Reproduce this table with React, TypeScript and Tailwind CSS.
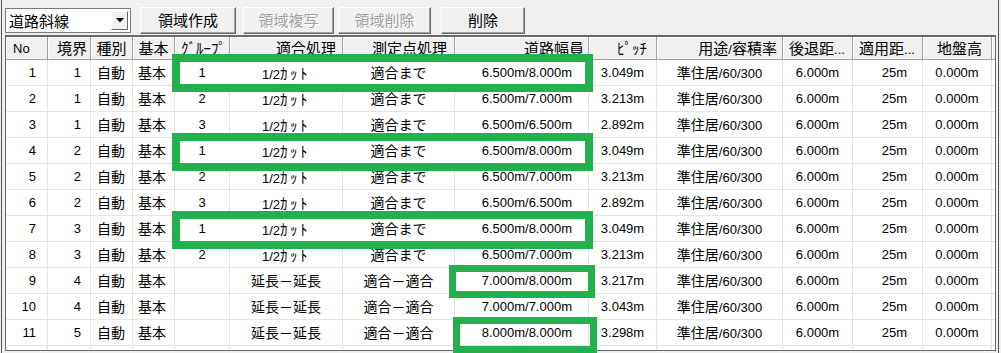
const jp = "font-['Noto_Sans_CJK_JP',sans-serif]";

function isWide(ch: string) {
  return /[\u3000-\u9fff\uff01-\uff60]/.test(ch);
}
function isKana(ch: string) {
  return /[\uff61-\uff9f]/.test(ch);
}

// split text into runs so CJK glyphs get their own size
function Txt({ s, big = false }: { s: string; big?: boolean }) {
  const runs: { t: string; k: number }[] = [];
  for (const ch of s) {
    const k = isWide(ch) ? 1 : isKana(ch) ? 2 : 0;
    const last = runs[runs.length - 1];
    if (last && last.k === k) last.t += ch;
    else runs.push({ t: ch, k });
  }
  return (
    <span className="whitespace-nowrap leading-none">
      {runs.map((r, i) =>
        r.k === 1 ? (
          <span key={i} className={`${jp} ${big ? "text-[15px]" : "text-[14px]"}`}>
            {r.t}
          </span>
        ) : r.k === 2 ? (
          <span key={i} className={`${jp} ${big ? "text-[15px]" : "text-[15px] tracking-[2.5px]"}`}>
            {r.t}
          </span>
        ) : (
          <span key={i}>{r.t}</span>
        )
      )}
    </span>
  );
}

const cols = [
  { w: "w-[42px]", h: "No", hc: "justify-start pl-[7px]", dc: "justify-end pr-[11px]" },
  { w: "w-[43px]", h: "境界", hc: "justify-end pr-[3px]", dc: "justify-end pr-[9px]" },
  { w: "w-[42px]", h: "種別", hc: "justify-center", dc: "justify-start pl-[6px]" },
  { w: "w-[42px]", h: "基本", hc: "justify-center", dc: "justify-start pl-[5px]" },
  { w: "w-[55px]", h: "ｸﾞﾙｰﾌﾟ", hc: "justify-start pl-[6px]", dc: "justify-center" },
  { w: "w-[113px]", h: "適合処理", hc: "justify-end pr-[6px]", dc: "justify-center" },
  { w: "w-[112px]", h: "測定点処理", hc: "justify-end pr-[7px]", dc: "justify-center" },
  { w: "w-[134px]", h: "道路幅員", hc: "justify-end pr-[4px]", dc: "justify-end pr-[16px]" },
  { w: "w-[68px]", h: "ﾋﾟｯﾁ", hc: "justify-end pr-[9px]", dc: "justify-center" },
  { w: "w-[126px]", h: "用途/容積率", hc: "justify-end pr-[5px]", dc: "justify-center" },
  { w: "w-[70px]", h: "後退距...", hc: "justify-start pl-[6px]", dc: "justify-center" },
  { w: "w-[70px]", h: "適用距...", hc: "justify-start pl-[6px]", dc: "justify-end pr-[15px]" },
  { w: "w-[69px]", h: "地盤高", hc: "justify-end pr-[9px]", dc: "justify-center" },
];

const rows = [
  ["1", "1", "自動", "基本", "1", "1/2ｶｯﾄ", "適合まで", "6.500m/8.000m", "3.049m"],
  ["2", "1", "自動", "基本", "2", "1/2ｶｯﾄ", "適合まで", "6.500m/7.000m", "3.213m"],
  ["3", "1", "自動", "基本", "3", "1/2ｶｯﾄ", "適合まで", "6.500m/6.500m", "2.892m"],
  ["4", "2", "自動", "基本", "1", "1/2ｶｯﾄ", "適合まで", "6.500m/8.000m", "3.049m"],
  ["5", "2", "自動", "基本", "2", "1/2ｶｯﾄ", "適合まで", "6.500m/7.000m", "3.213m"],
  ["6", "2", "自動", "基本", "3", "1/2ｶｯﾄ", "適合まで", "6.500m/6.500m", "2.892m"],
  ["7", "3", "自動", "基本", "1", "1/2ｶｯﾄ", "適合まで", "6.500m/8.000m", "3.049m"],
  ["8", "3", "自動", "基本", "2", "1/2ｶｯﾄ", "適合まで", "6.500m/7.000m", "3.213m"],
  ["9", "4", "自動", "基本", "", "延長－延長", "適合－適合", "7.000m/8.000m", "3.217m"],
  ["10", "4", "自動", "基本", "", "延長－延長", "適合－適合", "7.000m/7.000m", "3.043m"],
  ["11", "5", "自動", "基本", "", "延長－延長", "適合－適合", "8.000m/8.000m", "3.298m"],
  ["", "", "", "", "", "", "", "", ""],
].map((r) => (r[0] ? [...r, "準住居/60/300", "6.000m", "25m", "0.000m"] : [...r, "", "", "", ""]));

const marked = [0, 3, 6];

function Button({ label, w, off = false }: { label: string; w: string; off?: boolean }) {
  return (
    <div
      className={`${w} h-[27px] shrink-0 flex items-center justify-center bg-[#f0f0f0] border border-t-white border-l-white border-r-[#696969] border-b-[#696969] shadow-[inset_-1px_-1px_0_#a0a0a0] text-[15px] ${jp} ${
        off ? "text-[#a0a0a0] [text-shadow:1px_1px_0_#fff]" : "text-black"
      }`}
    >
      {label}
    </div>
  );
}

export default function App() {
  return (
    <div className="w-[1001px] h-[353px] bg-[#f0f0f0] relative overflow-hidden font-['Liberation_Sans','Noto_Sans_CJK_JP',sans-serif] text-[13px] text-black">
      <div className="ml-[1px] w-[998px] h-full border-x border-[#555]">
        {/* toolbar */}
        <div className="h-[35px] flex items-start pt-[7px]">
          <div className="ml-[3px] mt-[1px] w-[126px] h-[25px] bg-white border border-[#7a7a7a] flex items-center justify-between pl-[3px] pr-[2px]">
            <span className={`${jp} text-[15px] leading-none`}>道路斜線</span>
            <div className="w-[17px] h-[19px] bg-[#f0f0f0] border border-t-white border-l-white border-r-[#696969] border-b-[#696969] flex items-center justify-center">
              <svg width="8" height="5" viewBox="0 0 8 5">
                <polygon points="0,0 8,0 4,4.5" fill="#000" />
              </svg>
            </div>
          </div>
          <div className="ml-[9px]">
            <Button label="領域作成" w="w-[96px]" />
          </div>
          <div className="ml-[7px]">
            <Button label="領域複写" w="w-[91px]" off />
          </div>
          <div className="ml-[4px]">
            <Button label="領域削除" w="w-[93px]" off />
          </div>
          <div className="ml-[10px]">
            <Button label="削除" w="w-[84px]" />
          </div>
        </div>

        {/* grid */}
        <div className="ml-[3px] w-[991px] h-[316px] bg-white border border-t-2 border-[#6a6a6a] overflow-hidden">
          <div className="h-[23px] flex bg-[#f0f0f0] border-b border-[#a0a0a0]">
            {cols.map((c) => (
              <div
                key={c.h}
                className={`${c.w} shrink-0 h-full flex items-center border-r border-[#a0a0a0] shadow-[inset_1px_1px_0_#fff] ${c.hc}`}
              >
                <Txt s={c.h} big />
              </div>
            ))}
            <div className="flex-1 shadow-[inset_1px_1px_0_#fff]" />
          </div>
          {rows.map((r, ri) => (
            <div key={ri} className="h-[26px] flex border-b border-[#e4e4e4]">
              {cols.map((c, ci) => (
                <div
                  key={ci}
                  className={`${c.w} shrink-0 h-full flex items-center border-r ${c.dc} ${
                    marked.includes(ri) && ci >= 4 && ci <= 6 ? "border-white" : "border-[#e4e4e4]"
                  }`}
                >
                  <Txt s={r[ci]} />
                </div>
              ))}
            </div>
          ))}
        </div>
      </div>

      {/* green annotation boxes */}
      <div className="absolute left-[172px] top-[54px] w-[421px] h-[38px] border-[8px] border-[#22b14c]" />
      <div className="absolute left-[172px] top-[133px] w-[421px] h-[38px] border-[8px] border-[#22b14c]" />
      <div className="absolute left-[172px] top-[211px] w-[421px] h-[38px] border-[8px] border-[#22b14c]" />
      <div className="absolute left-[449px] top-[265px] w-[146px] h-[33px] border-[7px] border-[#22b14c]" />
      <div className="absolute left-[453px] top-[317px] w-[144px] h-[36px] border-[7px] border-[#22b14c]" />
    </div>
  );
}
